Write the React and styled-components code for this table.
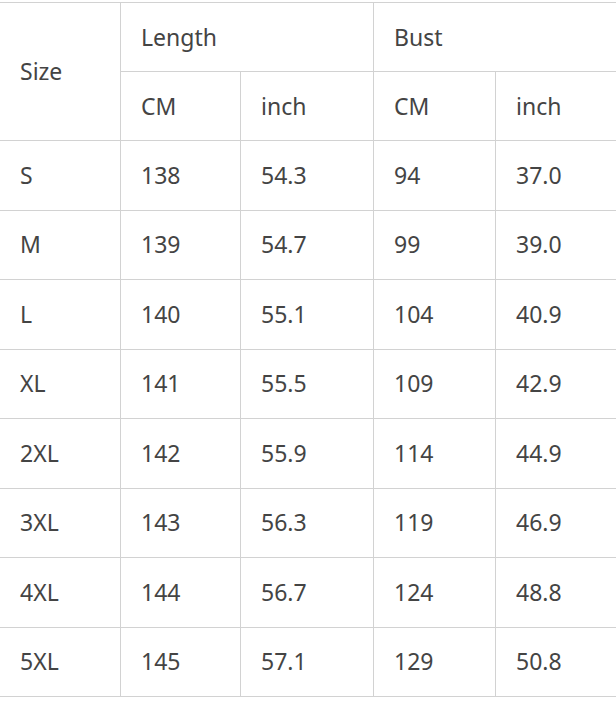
import styled, { createGlobalStyle } from "styled-components";

const GlobalStyle = createGlobalStyle`
  html, body {
    margin: 0;
    padding: 0;
    background: #ffffff;
  }
`;

const Wrapper = styled.div`
  width: 616px;
  overflow: hidden;
  padding-top: 2px;
`;

const Table = styled.table`
  border-collapse: collapse;
  table-layout: fixed;
  width: 640px;
  margin-left: -1px;
  font-family: "Noto Sans", "Open Sans", sans-serif;
  font-size: 23px;
  color: #444444;
`;

const Cell = styled.td`
  border: 1px solid #d2d2d2;
  padding: 0 0 0 20px;
  height: ${(p) => (p.$head ? "68px" : "68.5px")};
  text-align: left;
  vertical-align: middle;
  font-weight: 400;
  white-space: nowrap;
  line-height: 1;
`;

const sizes = [
  ["S", "138", "54.3", "94", "37.0"],
  ["M", "139", "54.7", "99", "39.0"],
  ["L", "140", "55.1", "104", "40.9"],
  ["XL", "141", "55.5", "109", "42.9"],
  ["2XL", "142", "55.9", "114", "44.9"],
  ["3XL", "143", "56.3", "119", "46.9"],
  ["4XL", "144", "56.7", "124", "48.8"],
  ["5XL", "145", "57.1", "129", "50.8"],
];

function App() {
  return (
    <Wrapper>
      <GlobalStyle />
      <Table>
        <colgroup>
          <col style={{ width: 121 }} />
          <col style={{ width: 120 }} />
          <col style={{ width: 133 }} />
          <col style={{ width: 122 }} />
          <col style={{ width: 144 }} />
        </colgroup>
        <thead>
          <tr>
            <Cell as="th" $head rowSpan={2}>
              Size
            </Cell>
            <Cell as="th" $head colSpan={2}>
              Length
            </Cell>
            <Cell as="th" $head colSpan={2}>
              Bust
            </Cell>
          </tr>
          <tr>
            <Cell as="th" $head>CM</Cell>
            <Cell as="th" $head>inch</Cell>
            <Cell as="th" $head>CM</Cell>
            <Cell as="th" $head>inch</Cell>
          </tr>
        </thead>
        <tbody>
          {sizes.map((row) => (
            <tr key={row[0]}>
              {row.map((v, i) => (
                <Cell key={i}>{v}</Cell>
              ))}
            </tr>
          ))}
        </tbody>
      </Table>
    </Wrapper>
  );
}

export default App;
